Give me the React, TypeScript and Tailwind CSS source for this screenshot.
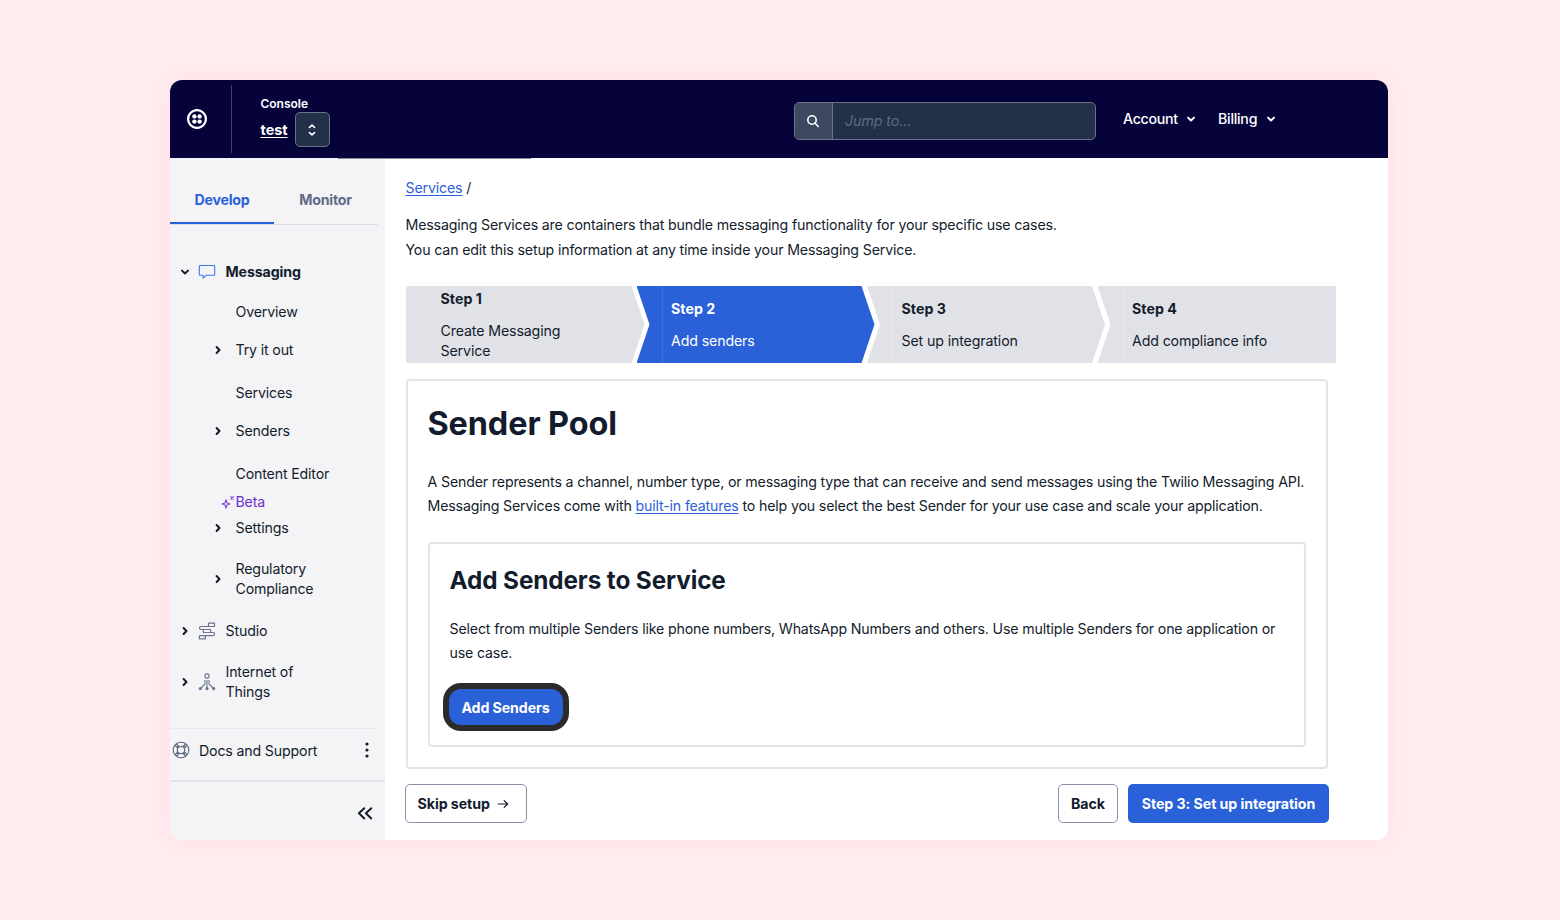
import type { ReactNode } from "react";
import clsx from "clsx";

type NavItem = {
  label: string;
  expandable?: boolean;
  className: string;
};

const NAV_ITEMS: NavItem[] = [
  { label: "Overview", className: "h-[40px]" },
  { label: "Try it out", expandable: true, className: "h-[36px]" },
  { label: "Services", className: "h-[49px]" },
  { label: "Senders", expandable: true, className: "h-[28px]" },
];

const STEPS = [
  {
    title: "Step 1",
    text: "Create Messaging Service",
    className:
      "w-[239px] pl-[35px] [clip-path:polygon(0_0,226px_0,100%_50%,226px_100%,0_100%)]",
  },
  {
    title: "Step 2",
    text: "Add senders",
    active: true,
    className:
      "-ml-[8px] w-[239px] pl-[34.5px] [clip-path:polygon(0_0,225px_0,238px_50%,225px_100%,0_100%,13px_50%)] before:absolute before:inset-y-0 before:left-[25px] before:w-px before:bg-white/10",
  },
  {
    title: "Step 3",
    text: "Set up integration",
    className:
      "-ml-[8.5px] w-[239px] pl-[34.5px] [clip-path:polygon(0_0,225px_0,238px_50%,225px_100%,0_100%,13px_50%)] before:absolute before:inset-y-0 before:left-[25px] before:w-px before:bg-white/20",
  },
  {
    title: "Step 4",
    text: "Add compliance info",
    className:
      "-ml-[8.5px] w-[238.5px] pl-[34.5px] [clip-path:polygon(0_0,100%_0,100%_100%,0_100%,13px_50%)] before:absolute before:inset-y-0 before:left-[25px] before:w-px before:bg-white/20",
  },
];

const Chevron = ({ className }: { className?: string }) => (
  <svg
    viewBox="0 0 10 10"
    fill="none"
    stroke="currentColor"
    strokeWidth="2"
    strokeLinecap="round"
    strokeLinejoin="round"
    className={clsx("size-[10px] shrink-0", className)}
  >
    <path d="M2 3.6 5 6.5l3-2.9" />
  </svg>
);

const TwilioLogo = () => (
  <svg viewBox="0 0 20 20" className="size-5 fill-white">
    <circle cx="10" cy="10" r="8.9" fill="none" stroke="#fff" strokeWidth="2.3" />
    <circle cx="7.4" cy="7.4" r="2.2" />
    <circle cx="12.6" cy="7.4" r="2.2" />
    <circle cx="7.4" cy="12.6" r="2.2" />
    <circle cx="12.6" cy="12.6" r="2.2" />
  </svg>
);

const MessageIcon = () => (
  <svg
    viewBox="0 0 18 18"
    fill="none"
    stroke="#4076ec"
    strokeWidth="1.1"
    strokeLinejoin="round"
    className="size-[18px] shrink-0"
  >
    <path d="M2 2.5h14a.7.7 0 0 1 .7.7v8.4a.7.7 0 0 1-.7.7H8.3l-3.2 2.9v-2.9H2a.7.7 0 0 1-.7-.7V3.2a.7.7 0 0 1 .7-.7Z" />
  </svg>
);

const StudioIcon = () => (
  <svg
    viewBox="0 0 18 18"
    fill="none"
    stroke="#6b7491"
    strokeWidth="1.2"
    strokeLinejoin="round"
    className="size-[18px] shrink-0"
  >
    <path d="M10.5 1.2h6v3.3h-6ZM1.4 13.7h6v3.1h-6ZM5.3 7.5h7.2v3H5.3Z" />
    <path d="M10.5 4.5H3a1.5 1.5 0 0 0 0 3h2.3M12.5 10.5H15a1.6 1.6 0 0 1 0 3.2H7.4" />
  </svg>
);

const IotIcon = () => (
  <svg
    viewBox="0 0 18 18"
    fill="none"
    stroke="#6b7491"
    strokeWidth="1.1"
    className="size-[18px] shrink-0"
  >
    <circle cx="9" cy="3" r="2.1" />
    <path d="M9 7v8M7 7v4l-4.5 4.5M11 7v4l4.5 4.5" />
    <g fill="#6b7491" stroke="none">
      <circle cx="2.3" cy="15.6" r="1.6" />
      <circle cx="9" cy="15.6" r="1.6" />
      <circle cx="15.7" cy="15.6" r="1.6" />
    </g>
  </svg>
);

// life ring: rounded hole in the middle, a thick band on each diagonal
const SupportIcon = () => (
  <svg
    viewBox="0 0 18 18"
    fill="none"
    stroke="#606b85"
    className="-mt-px size-[18px] shrink-0"
  >
    <circle cx="9" cy="9" r="7.8" strokeWidth="1.1" />
    <circle cx="9" cy="9" r="3.7" strokeWidth="1.3" />
    <path
      strokeWidth="3.2"
      d="M3.7 3.7l2.7 2.7M14.3 3.7l-2.7 2.7M3.7 14.3l2.7-2.7M14.3 14.3l-2.7-2.7"
    />
    <path
      stroke="#f4f4f6"
      strokeWidth="0.9"
      d="M3.9 3.9l1.3 1.3M14.1 3.9l-1.3 1.3M3.9 14.1l1.3-1.3M14.1 14.1l-1.3-1.3"
    />
  </svg>
);

const SparkleIcon = () => (
  <svg
    viewBox="0 0 14 14"
    fill="none"
    stroke="#7b43d6"
    strokeWidth="1.1"
    strokeLinejoin="round"
    className="size-[14px] shrink-0"
  >
    <path d="M5 4.7 6 7.9l3 1-3 1L5 13.100l-1-3.200-3-1 3-1ZM9.500 1.300l3.400 3.400M12.900 1.300 9.500 4.700" />
  </svg>
);

const NavRow = ({ label, expandable, className }: NavItem) => (
  <div className={clsx("flex items-center", className)}>
    <div className="flex w-[65.5px] pl-[42.5px]">
      {expandable && <Chevron className="-rotate-90" />}
    </div>
    {label}
  </div>
);

const SectionRow = ({
  label,
  icon,
  className,
}: {
  label: ReactNode;
  icon: ReactNode;
  className: string;
}) => (
  <div className={clsx("flex items-center pl-[10px]", className)}>
    <Chevron className="-rotate-90" />
    <div className="mr-[9.5px] ml-2">{icon}</div>
    <span>{label}</span>
  </div>
);

const Header = () => (
  <header className="relative flex h-[78px] shrink-0 bg-[#06033a] text-white">
    <div className="flex w-[61px] items-center justify-center pr-[7px]">
      <TwilioLogo />
    </div>
    <div className="my-[5px] w-px bg-[#45425f]" />
    <div className="ml-[28.5px] pt-[16px]">
      <div className="text-[12px] leading-[15px] font-semibold tracking-[-0.02px]">
        Console
      </div>
      <div className="mt-px flex items-center gap-[7px]">
        <a className="text-[14.4px] leading-5 font-bold tracking-normal underline underline-offset-2">
          test
        </a>
        <button className="flex size-[35px] flex-col items-center justify-center rounded-[5px] border border-[#6d7287] bg-[#22304a]">
          <svg
            viewBox="0 0 10 14"
            fill="none"
            stroke="currentColor"
            strokeWidth="1.7"
            strokeLinecap="round"
            strokeLinejoin="round"
            className="h-[14px] w-[10px]"
          >
            <path d="M2.5 4.3 5 2.2l2.5 2.1M2.5 9.7 5 11.800l2.500-2.100" />
          </svg>
        </button>
      </div>
    </div>
    <div className="mt-[22px] ml-auto flex h-[38px] w-[302px] overflow-hidden rounded-[5px] border border-[#6d7287] bg-[#22304a]">
      <div className="flex w-[38px] items-center justify-center border-r border-[#6d7287] bg-[#3e4860]">
        <svg
          viewBox="0 0 14 14"
          fill="none"
          stroke="currentColor"
          strokeWidth="1.6"
          strokeLinecap="round"
          className="-ml-px size-[14px]"
        >
          <circle cx="6" cy="6" r="4.2" />
          <path d="m9.200 9.200 3 3.300" />
        </svg>
      </div>
      <span className="pl-3 leading-[36px] tracking-[-0.05px] text-[#606b85] italic">
        Jump to...
      </span>
    </div>
    <div className="flex w-[292px] items-start pt-[29px] pl-[27px] leading-5 font-medium">
      <span className="flex w-[95px] items-center tracking-[-0.3px]">
        Account <Chevron className="mr-[22px] ml-auto" />
      </span>
      <span className="flex w-[61px] items-center tracking-[-0.25px]">
        Billing <Chevron className="mr-[3px] ml-auto" />
      </span>
    </div>
    <div className="absolute -bottom-px left-[168px] h-px w-[193px] bg-[#8d8ba3]" />
  </header>
);

const Sidebar = () => (
  <aside className="flex w-[215px] shrink-0 flex-col bg-[#f4f4f6]">
    <div className="mr-[7px] flex h-[67px] border-b border-[#dadce3] font-bold tracking-[-0.2px] text-[#606b85]">
      <div className="flex h-[66px] w-[104px] items-center justify-center border-b-2 border-[#2a61d9] pt-[20px] text-[#2a61d9]">
        Develop
      </div>
      <div className="flex w-[103px] items-center justify-center pt-[18px]">
        Monitor
      </div>
    </div>
    <nav className="h-[503px] pt-[37px] leading-5">
      <div className="flex h-[20px] items-center pl-[10px] font-bold tracking-[-0.13px]">
        <Chevron />
        <div className="mr-[9.5px] ml-2">
          <MessageIcon />
        </div>
        Messaging
      </div>
      <div className="pt-[10px]">
        {NAV_ITEMS.map((item) => (
          <NavRow key={item.label} {...item} />
        ))}
      </div>
      <div className="mt-[19px] pl-[65.5px]">Content Editor</div>
      <div className="mt-[8px] flex items-center pl-[51px] text-[#6d2ed1]">
        <SparkleIcon />
        <span className="ml-[0.5px]">Beta</span>
      </div>
      <NavRow label="Settings" expandable className="mt-[6px] h-5" />
      <div className="mt-[21px] flex items-center">
        <div className="w-[65.5px] pl-[42.5px]">
          <Chevron className="-rotate-90" />
        </div>
        <span className="w-[100px]">Regulatory Compliance</span>
      </div>
      <SectionRow label="Studio" icon={<StudioIcon />} className="mt-[22px]" />
      <SectionRow
        label={
          <>
            Internet of
            <br />
            Things
          </>
        }
        icon={<IotIcon />}
        className="mt-[21px]"
      />
    </nav>
    <div className="mr-[7px] flex h-[52px] items-center border-t border-[#e8e9ee] pb-[8px] pl-[2px]">
      <SupportIcon />
      <span className="ml-[9px]">Docs and Support</span>
      <svg
        viewBox="0 0 4 16"
        className="-mt-px mr-[9px] ml-auto h-4 w-1 fill-[#121c2d]"
      >
        <circle cx="2" cy="2" r="1.6" />
        <circle cx="2" cy="8" r="1.6" />
        <circle cx="2" cy="14" r="1.6" />
      </svg>
    </div>
    <div className="flex flex-1 justify-end border-t-2 border-[#e1e3ea] pt-[24px] pr-[12px]">
      <svg
        viewBox="0 0 16 14"
        fill="none"
        stroke="currentColor"
        strokeWidth="2"
        strokeLinecap="round"
        strokeLinejoin="round"
        className="h-[14px] w-4"
      >
        <path d="M7.300 2.200 1.900 7.300l5.400 5.100M14.300 2.200 8.900 7.300l5.400 5.100" />
      </svg>
    </div>
  </aside>
);

const StepBar = () => (
  <div className="mt-[24px] flex h-[77px] w-[931px] overflow-hidden rounded-[2px]">
    {STEPS.map((step) => (
      <div
        key={step.title}
        className={clsx(
          "relative flex shrink-0 flex-col justify-center leading-5",
          step.active ? "bg-[#2a61d9] text-white" : "bg-[#e1e2e8]",
          step.className
        )}
      >
        <div className="mb-3 font-bold tracking-[0.05px]">{step.title}</div>
        <div className="w-[150px] tracking-[-0.13px]">{step.text}</div>
      </div>
    ))}
  </div>
);

const Content = () => (
  <main className="flex-1 bg-white pt-[20px] pl-[20.5px]">
    <div className="leading-5">
      <a className="text-[#2a61d9] underline underline-offset-2">Services</a> /
    </div>
    <div className="mt-[15px] leading-[24.5px]">
      Messaging Services are containers that bundle messaging functionality for
      your specific use cases.
      <br />
      You can edit this setup information at any time inside your Messaging
      Service.
    </div>
    <StepBar />
    <section className="mt-[16px] h-[390px] w-[922.5px] rounded-[4px] border-2 border-[#e3e4ea] px-[20px] pt-[22px]">
      <h1 className="text-[32.4px] leading-[42px] font-bold tracking-[-0.1px]">
        Sender Pool
      </h1>
      <p className="mt-[25px] leading-[24px] whitespace-nowrap">
        A Sender represents a channel, number type, or messaging type that can
        receive and send messages using the Twilio Messaging API.
        <br />
        Messaging Services come with{" "}
        <a className="text-[#2a61d9] underline underline-offset-2">
          built-in features
        </a>{" "}
        to help you select the best Sender for your use case and scale your
        application.
      </p>
      <div className="mt-[24px] h-[205px] rounded-[4px] border-2 border-[#e3e4ea] px-[20px] pt-[20px]">
        <h2 className="text-[24.3px] leading-[32px] font-bold tracking-[-0.1px]">
          Add Senders to Service
        </h2>
        <p className="mt-[21px] leading-[24px] whitespace-nowrap">
          Select from multiple Senders like phone numbers, WhatsApp Numbers and
          others. Use multiple Senders for one application or
          <br />
          use case.
        </p>
        <button className="mt-[18px] -ml-[7px] flex h-[48px] w-[126px] items-center justify-center rounded-[18px] border-[6px] border-[#2b2b2c] bg-[#2a61d9] pt-[2px] font-bold tracking-[-0.09px] text-white">
          Add Senders
        </button>
      </div>
    </section>
    <div className="mt-[15px] -ml-px flex h-[39px] w-[924.5px] font-bold tracking-[-0.07px]">
      <button className="flex w-[122px] items-center rounded-[5px] border border-[#8891aa] pl-[12px]">
        Skip setup
        <svg
          viewBox="0 0 12 12"
          fill="none"
          stroke="currentColor"
          strokeWidth="1.2"
          strokeLinecap="round"
          strokeLinejoin="round"
          className="ml-[7px] size-3"
        >
          <path d="M1.300 6h9.400M7.200 2.600 10.700 6 7.200 9.400" />
        </svg>
      </button>
      <button className="ml-auto w-[60px] rounded-[5px] border border-[#8891aa]">
        Back
      </button>
      <button className="ml-[10px] w-[201px] rounded-[5px] bg-[#2a61d9] text-white">
        Step 3: Set up integration
      </button>
    </div>
  </main>
);

const App = () => (
  <div className="flex h-[920px] w-[1560px] bg-[#ffecef] pt-[80px] pl-[170px] font-['Inter',sans-serif] text-[14.2px] tracking-[-0.166px] text-[#121c2d]">
    <div className="flex h-[760px] w-[1218px] flex-col overflow-hidden rounded-[12px] shadow-[0_0_24px_rgba(240,90,110,0.08)]">
      <Header />
      <div className="flex flex-1">
        <Sidebar />
        <Content />
      </div>
    </div>
  </div>
);

export default App;
